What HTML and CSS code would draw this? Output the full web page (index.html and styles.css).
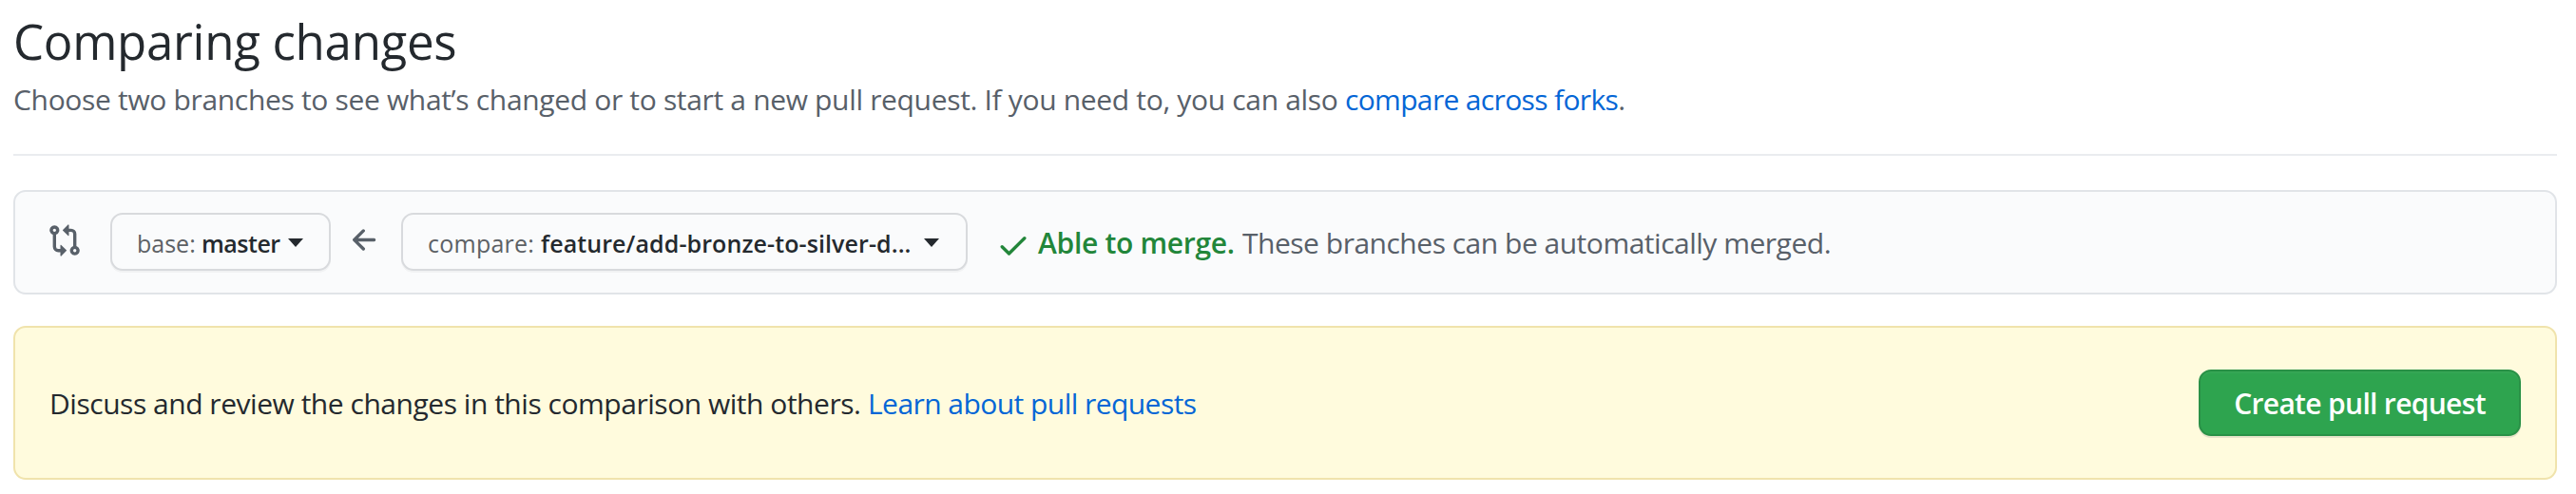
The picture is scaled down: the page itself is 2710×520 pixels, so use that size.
FILE: index.html
```html
<!DOCTYPE html>
<html lang="en">
<head>
<meta charset="utf-8">
<title>Comparing changes</title>
<link rel="stylesheet" href="styles.css">
</head>
<body>
<main class="page">
  <header class="page-head">
    <h1 class="title">Comparing changes</h1>
    <p class="subtitle">Choose two branches to see what’s changed or to start a new pull request. If you need to, you can also <a class="link forks" href="#">compare across forks</a>.</p>
  </header>

  <section class="range-editor">
    <svg class="icon icon-compare" viewBox="0 0 16 16"><path fill-rule="evenodd" d="M9.573.677L7.177 3.073a.25.25 0 000 .354l2.396 2.396A.25.25 0 0010 5.646V4h1a1 1 0 011 1v5.628a2.251 2.251 0 101.5 0V5A2.5 2.5 0 0011 2.5h-1V.854a.25.25 0 00-.427-.177zM6 12v-1.646a.25.25 0 01.427-.177l2.396 2.396a.25.25 0 010 .354l-2.396 2.396A.25.25 0 016 15.146V13.5H5A2.5 2.5 0 012.5 11V5.372a2.25 2.25 0 111.5 0V11a1 1 0 001 1h1zm6 .75a.75.75 0 101.5 0 .75.75 0 00-1.5 0zM4 3.25a.75.75 0 10-1.5 0 .75.75 0 001.5 0z"/></svg>
    <button class="select select-base" type="button"><span class="label">base:</span><span class="branch">master</span><span class="caret"></span></button>
    <svg class="icon icon-arrow" viewBox="0 0 16 16"><path d="M7.78 12.53a.75.75 0 01-1.06 0L2.47 8.28a.75.75 0 010-1.06l4.25-4.25a.75.75 0 011.06 1.06L4.81 7h7.44a.75.75 0 010 1.5H4.81l2.97 2.97a.75.75 0 010 1.06z"/></svg>
    <button class="select select-compare" type="button"><span class="label">compare:</span><span class="branch">feature/add-bronze-to-silver-d...</span><span class="caret"></span></button>
    <svg class="icon icon-check" viewBox="0 0 16 16"><path d="M13.78 4.22a.75.75 0 010 1.06l-7.25 7.25a.75.75 0 01-1.06 0L2.22 9.28a.75.75 0 011.06-1.06L6 10.94l6.72-6.72a.75.75 0 011.06 0z"/></svg>
    <strong class="merge-ok">Able to merge.</strong>
    <span class="merge-note">These branches can be automatically merged.</span>
  </section>

  <section class="prompt">
    <p class="prompt-text">Discuss and review the changes in this comparison with others.</p>
    <a class="link learn" href="#">Learn about pull requests</a>
    <button class="create" type="button">Create pull request</button>
  </section>
</main>
</body>
</html>
```

FILE: styles.css
```css
* { box-sizing: border-box; }

body {
  margin: 0;
  background: #fff;
  color: #24292e;
  font-family: "Open Sans", "Noto Sans", sans-serif;
  font-size: 30px;
  line-height: 48px;
  white-space: nowrap;
}

button { font-family: inherit; }

.page { padding: 6px 20px 0 14px; }

.page-head {
  height: 158px;
  border-bottom: 2px solid #eaecef;
}

.title {
  margin: 0;
  font-size: 51px;
  font-weight: 400;
  line-height: 75px;
  letter-spacing: -0.3px;
}

.subtitle {
  margin: 0;
  color: #586069;
  letter-spacing: -0.33px;
}

.link {
  color: #0366d6;
  text-decoration: none;
}

.forks { letter-spacing: -0.65px; }

.range-editor {
  display: flex;
  align-items: center;
  height: 110px;
  margin-top: 36px;
  padding-left: 34px;
  border: 2px solid #e1e4e8;
  border-radius: 13px;
  background: #fafbfc;
}

.icon {
  flex: none;
  width: 36px;
  height: 36px;
  margin-bottom: 5px;
  fill: #586069;
}

.icon-arrow { margin-left: 18px; }

.icon-check {
  margin: 5px 8px 0 30px;
  fill: #22863a;
}

.select {
  display: flex;
  align-items: center;
  height: 61px;
  margin-bottom: 1px;
  padding: 2px 0 0 26px;
  border: 2px solid #d8dadd;
  border-radius: 13px;
  background: #fafbfc;
  box-shadow: 0 2px 0 rgba(27, 31, 35, 0.04);
  color: #24292e;
  font-size: 25px;
  line-height: 40px;
}

.select-base { width: 232px; margin-left: 30px; }
.select-compare { width: 596px; margin-left: 20px; }

.label { color: #5d6165; }
.branch { font-weight: 600; }

.select-base .label { width: 68px; text-align: left; }
.select-base .branch { width: 91px; text-align: left; letter-spacing: -0.5px; }
.select-compare .label { width: 119px; text-align: left; letter-spacing: 0.25px; }
.select-compare .branch { width: 403px; text-align: left; letter-spacing: 0.1px; }

.caret {
  border: solid transparent;
  border-width: 9px 8.5px 0;
  border-top-color: #24292e;
}

.merge-ok {
  width: 215px;
  margin-top: 2px;
  color: #22863a;
  font-weight: 600;
  letter-spacing: -0.3px;
}

.merge-note {
  margin-top: 2px;
  color: #586069;
  letter-spacing: -0.49px;
}

.prompt {
  display: flex;
  align-items: center;
  height: 162px;
  margin-top: 33px;
  padding: 0 36px 0 36px;
  border: 2px solid #f0e3ac;
  border-radius: 13px;
  background: #fffbdd;
}

.prompt-text {
  width: 861px;
  margin: 2px 0 0;
  letter-spacing: -0.47px;
}

.learn {
  margin-top: 2px;
  letter-spacing: -0.55px;
}

.create {
  width: 339px;
  height: 70px;
  margin-left: auto;
  padding: 1px 0 0;
  border: 2px solid #2a9147;
  border-radius: 13px;
  background: #2ea44f;
  box-shadow: 0 2px 0 rgba(27, 31, 35, 0.1), inset 0 2px 0 rgba(255, 255, 255, 0.03);
  color: #fff;
  font-size: 30px;
  font-weight: 600;
  line-height: 48px;
  letter-spacing: -0.68px;
}
```
